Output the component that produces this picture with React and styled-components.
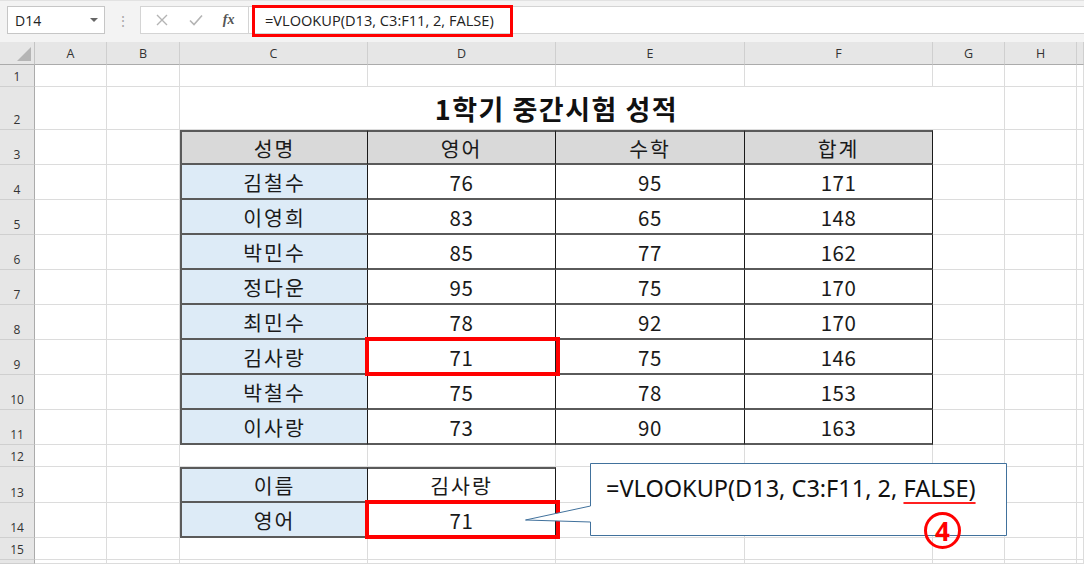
import React from "react";
import styled, { createGlobalStyle } from "styled-components";

const Global = createGlobalStyle`
  html, body { margin: 0; padding: 0; background: #ffffff; }
  body { width: 1084px; height: 564px; overflow: hidden; font-family: "Noto Sans", "Noto Sans CJK KR", sans-serif; }
  * { box-sizing: border-box; }
`;

const COLS = [35, 72, 73, 188, 188, 189, 188, 72, 72, 7];
const LETTERS = ["", "A", "B", "C", "D", "E", "F", "G", "H", ""];
const ROW_H = { 1: 22, 2: 43, 12: 22, 13: 36, 15: 22 };
const rowHeight = (r) => ROW_H[r] || 35;

const Page = styled.div`
  width: 1084px;
  height: 564px;
  display: flex;
  flex-direction: column;
  background: #ffffff;
  position: relative;
  overflow: hidden;
`;

const FormulaBar = styled.div`
  height: 42px;
  flex: none;
  background: #f3f3f3;
  border-top: 1px solid #e2e2e2;
  display: flex;
  align-items: flex-start;
  padding: 5px 0 0 7px;
`;

const NameBox = styled.div`
  width: 98px;
  height: 28px;
  background: #ffffff;
  border: 1px solid #c6c6c6;
  display: flex;
  align-items: center;
  justify-content: space-between;
  padding: 0 6px 0 7px;
  font-family: "Open Sans", "Noto Sans", sans-serif;
  font-size: 14px;
  color: #222;
`;

const Caret = styled.span`
  width: 0;
  height: 0;
  border-left: 4px solid transparent;
  border-right: 4px solid transparent;
  border-top: 4px solid #666;
`;

const Dots = styled.div`
  width: 35px;
  height: 28px;
  display: flex;
  align-items: center;
  justify-content: center;
  color: #a8a8a8;
  font-size: 14px;
`;

const IconBox = styled.div`
  width: 108px;
  height: 28px;
  background: #ffffff;
  border: 1px solid #d4d4d4;
  border-right: none;
  display: flex;
  align-items: center;
  justify-content: space-around;
  padding: 0 4px;
  color: #b8b8b8;
`;

const Fx = styled.span`
  font-family: "Liberation Serif", serif;
  font-style: italic;
  font-weight: bold;
  font-size: 14px;
  color: #555;
`;

const FormulaInput = styled.div`
  flex: 1;
  height: 28px;
  background: #ffffff;
  border: 1px solid #d4d4d4;
  border-right: none;
  position: relative;
  display: flex;
  align-items: center;
  padding-left: 16px;
  font-family: "Open Sans", "Noto Sans", sans-serif;
  font-size: 14.6px;
  color: #222;
`;

const FormulaHighlight = styled.div`
  position: absolute;
  left: 3px;
  top: -2px;
  width: 261px;
  height: 32px;
  border: 3px solid #ff0000;
  pointer-events: none;
`;

const Sheet = styled.div`
  display: grid;
  grid-template-columns: ${COLS.map((c) => c + "px").join(" ")};
  grid-template-rows: 23px ${Array.from({ length: 15 }, (_, i) => rowHeight(i + 1) + "px").join(" ")} 1fr;
  flex: 1;
`;

const Corner = styled.div`
  background: #e6e6e6;
  border-right: 1px solid #c4c4c4;
  border-bottom: 1px solid #ababab;
  position: relative;
  &::after {
    content: "";
    position: absolute;
    right: 3px;
    bottom: 3px;
    width: 0;
    height: 0;
    border-left: 14px solid transparent;
    border-bottom: 14px solid #b5b5b5;
  }
`;

const ColHead = styled.div`
  background: #e6e6e6;
  border-right: 1px solid #cfcfcf;
  border-bottom: 1px solid #ababab;
  display: flex;
  align-items: center;
  justify-content: center;
  font-family: "Open Sans", "Noto Sans", sans-serif;
  font-size: 12.5px;
  color: #333;
`;

const RowHead = styled.div`
  background: #e6e6e6;
  border-right: 1px solid #ababab;
  border-bottom: 1px solid #cfcfcf;
  display: flex;
  align-items: flex-end;
  justify-content: center;
  padding-bottom: 1px;
  font-family: "Open Sans", "Noto Sans", sans-serif;
  font-size: 12px;
  color: #333;
`;

const Empty = styled.div`
  border-right: 1px solid #dcdcdc;
  border-bottom: 1px solid #dcdcdc;
  background: #ffffff;
`;

const Title = styled.div`
  grid-column: span 4;
  border-bottom: 1px solid #dcdcdc;
  display: flex;
  align-items: center;
  justify-content: center;
  font-family: "Noto Sans CJK KR", sans-serif;
  font-weight: 700;
  font-size: 27px;
  letter-spacing: 1.5px;
  color: #111;
  padding-top: 1px;
`;

const BG = { head: "#d9d9d9", name: "#ddebf7", value: "#ffffff" };

const Cell = styled.div`
  background: ${(p) => BG[p.$kind]};
  border-right: 1px solid #1a1a1a;
  border-bottom: 2px solid #5a5a5a;
  border-left: ${(p) => (p.$first ? "2px solid #5a5a5a" : "none")};
  border-top: ${(p) => (p.$top ? "2px solid #5a5a5a" : "none")};
  display: flex;
  align-items: center;
  justify-content: center;
  font-family: "Noto Sans CJK KR", sans-serif;
  font-size: 20.5px;
  letter-spacing: ${(p) => (p.$hangul ? "2px" : "0.5px")};
  color: #1a1a1a;
  position: relative;
  z-index: ${(p) => (p.$mark ? 2 : "auto")};
  &::after {
    content: "";
    display: ${(p) => (p.$mark ? "block" : "none")};
    position: absolute;
    left: -3px;
    right: -5px;
    top: -3px;
    bottom: -3px;
    border: 4px solid #ff0000;
    pointer-events: none;
  }
`;

const Callout = styled.div`
  position: absolute;
  left: 525px;
  top: 463px;
  width: 483px;
  height: 74px;
  z-index: 3;
`;

const CalloutShape = styled.svg`
  position: absolute;
  left: 0;
  top: 0;
`;

const CalloutText = styled.div`
  position: absolute;
  left: 81px;
  top: 9px;
  font-family: "Noto Sans", sans-serif;
  font-size: 23.5px;
  line-height: 32px;
  color: #111;
  white-space: nowrap;
`;

const Under = styled.span`
  text-decoration: underline;
  text-decoration-color: #ff2020;
  text-decoration-thickness: 2px;
  text-underline-offset: 5px;
`;

const Circled = styled.div`
  position: absolute;
  left: 399px;
  top: 49px;
  width: 37px;
  height: 37px;
  border: 3px solid #ff0000;
  border-radius: 50%;
  display: flex;
  align-items: center;
  justify-content: center;
  font-family: "Noto Sans", sans-serif;
  font-weight: 700;
  font-size: 26px;
  line-height: 26px;
  color: #ff0000;
`;

const header = ["성명", "영어", "수학", "합계"];
const data = [
  ["김철수", "76", "95", "171"],
  ["이영희", "83", "65", "148"],
  ["박민수", "85", "77", "162"],
  ["정다운", "95", "75", "170"],
  ["최민수", "78", "92", "170"],
  ["김사랑", "71", "75", "146"],
  ["박철수", "75", "78", "153"],
  ["이사랑", "73", "90", "163"],
];

function tableCell(r, c) {
  const idx = c - 3;
  if (r === 3 && idx >= 0 && idx < 4) return { kind: "head", text: header[idx], top: true };
  if (r >= 4 && r <= 11 && idx >= 0 && idx < 4)
    return { kind: idx === 0 ? "name" : "value", text: data[r - 4][idx], mark: r === 9 && idx === 1 };
  if (r === 13 && (idx === 0 || idx === 1))
    return { kind: idx === 0 ? "name" : "value", text: idx === 0 ? "이름" : "김사랑", top: true };
  if (r === 14 && (idx === 0 || idx === 1))
    return { kind: idx === 0 ? "name" : "value", text: idx === 0 ? "영어" : "71", mark: idx === 1 };
  return null;
}

export default function App() {
  const cells = [];
  COLS.forEach((_, c) => {
    cells.push(c === 0 ? <Corner key={"h" + c} /> : <ColHead key={"h" + c}>{LETTERS[c]}</ColHead>);
  });
  for (let r = 1; r <= 16; r++) {
    for (let c = 0; c < COLS.length; c++) {
      const key = r + "-" + c;
      if (c === 0) {
        cells.push(<RowHead key={key}>{r <= 15 ? r : ""}</RowHead>);
        continue;
      }
      if (r === 2 && c >= 3 && c <= 6) {
        if (c === 3) cells.push(<Title key={key}>1학기 중간시험 성적</Title>);
        continue;
      }
      const t = tableCell(r, c);
      if (t) {
        cells.push(
          <Cell
            key={key}
            $kind={t.kind}
            $first={c === 3}
            $top={t.top}
            $mark={t.mark}
            $hangul={!/^\d+$/.test(t.text)}
          >
            {t.text}
          </Cell>
        );
      } else {
        cells.push(<Empty key={key} />);
      }
    }
  }

  return (
    <Page>
      <Global />
      <FormulaBar>
        <NameBox>
          D14
          <Caret />
        </NameBox>
        <Dots>⋮</Dots>
        <IconBox>
          <svg width="14" height="14" viewBox="0 0 14 14">
            <path d="M2 2 L12 12 M12 2 L2 12" stroke="#b4b4b4" strokeWidth="1.4" fill="none" />
          </svg>
          <svg width="16" height="14" viewBox="0 0 16 14">
            <path d="M2 7.5 L6 11.5 L14 2.5" stroke="#b4b4b4" strokeWidth="1.6" fill="none" />
          </svg>
          <Fx>fx</Fx>
        </IconBox>
        <FormulaInput>
          =VLOOKUP(D13, C3:F11, 2, FALSE)
          <FormulaHighlight />
        </FormulaInput>
      </FormulaBar>
      <Sheet>{cells}</Sheet>
      <Callout>
        <CalloutShape width="483" height="74" viewBox="0 0 483 74">
          <path
            d="M65.5 0.5 H481.5 V72.5 H65.5 V59 L0.5 57 L65.5 43 Z"
            fill="#ffffff"
            stroke="#41719c"
            strokeWidth="1"
          />
        </CalloutShape>
        <CalloutText>
          =VLOOKUP(D13, C3:F11, 2, <Under>FALSE)</Under>
        </CalloutText>
        <Circled>4</Circled>
      </Callout>
    </Page>
  );
}
